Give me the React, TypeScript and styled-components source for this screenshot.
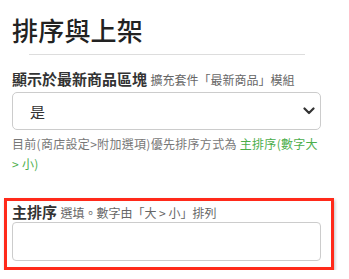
import React from "react"
import styled, { createGlobalStyle } from "styled-components"

const GlobalStyle = createGlobalStyle`
  body {
    margin: 0;
    background: #fff;
    font-family: "Noto Sans CJK TC", "Noto Sans", sans-serif;
  }
`

const App: React.FC = () => {
  return (
    <>
      <GlobalStyle />
      <Page>
        <Title>排序與上架</Title>
        <Divider />
        <Field>
          <Label>
            顯示於最新商品區塊 <Hint>擴充套件「最新商品」模組</Hint>
          </Label>
          <SelectWrap>
            <Select defaultValue="yes">
              <option value="yes">是</option>
              <option value="no">否</option>
            </Select>
            <Chevron width="12" height="8" viewBox="0 0 12 8">
              <path d="M1.5 1.5 L6 6 L10.5 1.5" fill="none" stroke="#333" strokeWidth="2.2" strokeLinecap="round" strokeLinejoin="round" />
            </Chevron>
          </SelectWrap>
          <Help>
            目前(商店設定&gt;附加選項)優先排序方式為 <Green>主排序(數字大 &gt; 小)</Green>
          </Help>
        </Field>
        <Marked>
          <Label $tight>
            主排序 <Hint>選填。數字由「大 &gt; 小」排列</Hint>
          </Label>
          <Input type="text" />
        </Marked>
      </Page>
    </>
  )
}

const Page = styled.div`
  width: 309px;
  padding: 12px 0 0 12px;
`

const Title = styled.h1`
  margin: 0;
  font-size: 26px;
  line-height: 36px;
  font-weight: 500;
  color: #222;
  letter-spacing: 0.2px;
`

const Divider = styled.hr`
  margin: 6px 16px 0 17px;
  border: 0;
  border-top: 1px solid #ddd;
`

const Field = styled.div`
  margin-top: 13px;
`

const Label = styled.div<{ $tight?: boolean }>`
  font-size: 15px;
  line-height: ${(p) => (p.$tight ? "19px" : "22px")};
  font-weight: 700;
  color: #333;
  white-space: nowrap;
`

const Hint = styled.span`
  font-size: 12px;
  font-weight: 400;
  color: #666;
`

const SelectWrap = styled.div`
  position: relative;
  margin-top: 1px;
`

const Select = styled.select`
  display: block;
  width: 309px;
  height: 38px;
  box-sizing: border-box;
  padding: 0 30px 0 17px;
  border: 1px solid #ccc;
  border-radius: 5px;
  background: #fff;
  font-family: inherit;
  font-size: 15px;
  color: #333;
  appearance: none;
  outline: none;
`

const Chevron = styled.svg`
  position: absolute;
  right: 6px;
  top: 15px;
  pointer-events: none;
`

const Help = styled.p`
  margin: 4px 0 0;
  font-size: 12px;
  line-height: 20px;
  letter-spacing: 0.3px;
  color: #777;
`

const Green = styled.span`
  color: #4cae4c;
`

const Marked = styled.div`
  margin: 24px 0 0 -8px;
  width: 330px;
  box-sizing: border-box;
  padding: 1px 10px 6px 5px;
  border: 3px solid #ff2a1a;
  box-shadow: 1px 2px 3px rgba(0, 0, 0, 0.25);
`

const Input = styled.input`
  display: block;
  width: 309px;
  height: 39px;
  box-sizing: border-box;
  border: 1px solid #ccc;
  border-radius: 4px;
  background: #fff;
  outline: none;
`

export default App
